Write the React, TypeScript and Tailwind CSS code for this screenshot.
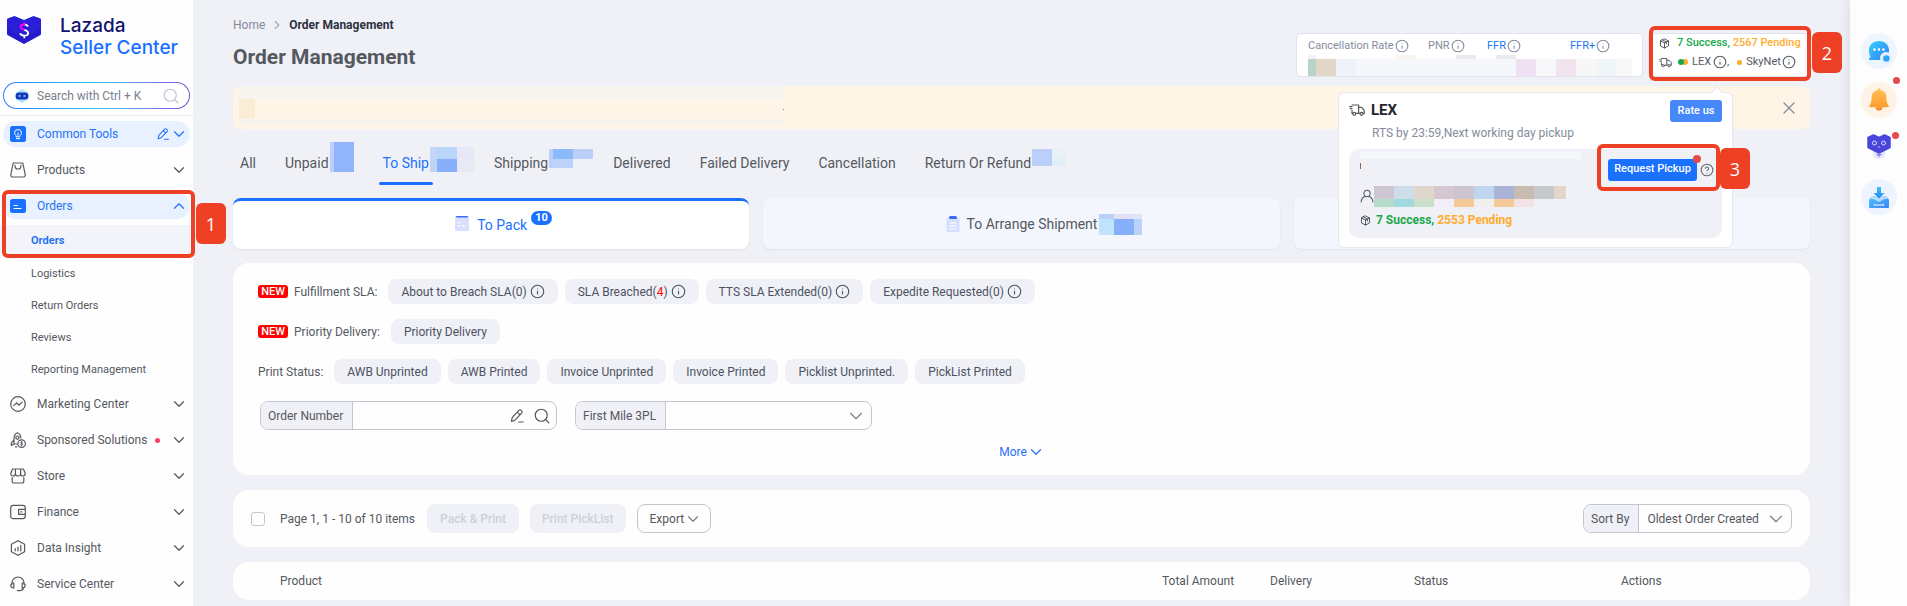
import type { ReactNode } from "react";
import { ChevronDown, ChevronRight, ChevronUp, CircleHelp, Info, Search, X } from "lucide-react";
import clsx from "clsx";

/* ---------- icons ---------- */

function Line({ children, className = "size-4" }: { children: ReactNode; className?: string }) {
  return (
    <svg
      viewBox="0 0 16 16"
      fill="none"
      stroke="currentColor"
      strokeWidth="1.2"
      strokeLinecap="round"
      strokeLinejoin="round"
      aria-hidden="true"
      className={clsx("shrink-0", className)}
    >
      {children}
    </svg>
  );
}

function EditIcon({ className }: { className?: string }) {
  return (
    <Line className={className}>
      <path d="M3.2 9.6 9.8 2.4a1.6 1.6 0 0 1 2.3 0l.5.5a1.6 1.6 0 0 1 0 2.3L6 12.2l-3.6 1.2zM8.4 4.2l2.6 2.6M9.6 14h4.6" />
    </Line>
  );
}

function TruckIcon({ className }: { className?: string }) {
  return (
    <Line className={className}>
      <path d="M3 3h6.6v8.4H6.8M3.6 11.4H3V8.4M.6 4.6H3M1.2 6.6H3M9.6 5.4h3l2.6 3v3h-1M9.6 11.4h1.4" />
      <circle cx="5.2" cy="11.8" r="1.5" />
      <circle cx="12.6" cy="11.8" r="1.5" />
    </Line>
  );
}

function ParcelIcon({ className }: { className?: string }) {
  return (
    <Line className={className}>
      <path d="m8 1.4 5.8 2.8v7.4L8 14.6l-5.8-3V4.2zM2.2 4.4 8 7.2l5.8-2.8M8 7.2v7.2M5 2.9l5.8 2.8v3" />
    </Line>
  );
}

function UserIcon({ className }: { className?: string }) {
  return (
    <Line className={className}>
      <circle cx="8" cy="5" r="3.6" />
      <path d="M1.2 14.8c.4-3.4 2-5.400 4.600-6.200M14.800 14.800c-.4-3.400-2-5.400-4.600-6.200" />
    </Line>
  );
}

function LogoMark() {
  return (
    <svg viewBox="0 0 36 30" className="h-[30px] w-9 shrink-0" aria-hidden="true">
      <path d="M1.500 4 8.500 1.500l9.500 4 9.500-4 7 2.500v15.500L18 28.500l-16.500-9z" fill="#2a1fd6" stroke="#2a1fd6" strokeLinejoin="round" />
      <path d="M1.500 14v5.500l16.500 9 16.500-9V14L18 23z" fill="#1c14b4" opacity=".4" />
      <path
        d="M22 11.500c-.6-1.300-1.900-2-3.700-2M18.300 14.800c2.500.8 3.900 1.500 3.900 3.200s-1.600 2.700-3.900 2.700-3.800-1-4.200-2.400M18.300 20.700v2.600"
        fill="none"
        stroke="#fff"
        strokeWidth="1.800"
      />
      <path d="M18.300 7.200v2.300c-2.300 0-3.800 1-3.800 2.500s1.400 2.100 3.800 2.800" fill="none" stroke="#f0f" strokeWidth="1.800" />
    </svg>
  );
}

function BotIcon() {
  return (
    <svg viewBox="0 0 14 16" className="h-4 w-3.5 shrink-0" aria-hidden="true">
      <path d="M7 1 13 4.500v7L7 15l-6-3.500v-7z" fill="#a8e6fb" />
      <rect x="0.500" y="4.500" width="13" height="7" rx="3.500" fill="#1736b8" />
      <circle cx="4.600" cy="8" r="1.100" fill="#7fd4ff" />
      <circle cx="9.400" cy="8" r="1.100" fill="#7fd4ff" />
    </svg>
  );
}

const icons = {
  tools: (
    <svg viewBox="0 0 16 16" className="size-4 shrink-0" aria-hidden="true">
      <rect width="16" height="16" rx="2.500" fill="#1a71ff" />
      <path
        d="M6.300 9.800C5 9 4.600 8 4.600 6.900a3.400 3.400 0 0 1 6.800 0c0 1.100-.4 2.100-1.700 2.900v1H6.300zM6.400 12.600h3.200M8 7v2.200"
        fill="none"
        stroke="#fff"
        strokeLinecap="round"
      />
    </svg>
  ),
  products: (
    <Line>
      <path d="M3.200 1h9.600l2.400 11.600a2 2 0 0 1-2 2.400H2.800a2 2 0 0 1-2-2.400z" />
      <path d="M5 3.400C5 5.600 6.200 7 8 7s3-1.400 3-3.600" />
    </Line>
  ),
  orders: (
    <svg viewBox="0 0 16 16" className="size-4 shrink-0" aria-hidden="true">
      <rect y="1" width="16" height="14" rx="2.500" fill="#1a71ff" />
      <path d="M4 7.500h3.500M4 10.500h7" fill="none" stroke="#fff" strokeWidth="1.200" strokeLinecap="round" />
    </svg>
  ),
  marketing: (
    <Line>
      <circle cx="8" cy="8" r="7.300" />
      <path d="m3.800 9.600 2.700-2.800 2.600 2.400 3-3" />
    </Line>
  ),
  sponsored: (
    <Line>
      <path d="M4 11.600V6.400C4 3.400 5.200 1.600 7.400.7c2.200.9 3.400 2.700 3.400 5.200M4 7.800l-2.600 3v2.800L4 12h3M5.400 14.800h1.400" />
      <circle cx="7.400" cy="5.600" r="1.600" />
      <circle cx="11.600" cy="11.600" r="3.800" />
      <path d="M12.800 10.400c-.4-.6-2.300-.7-2.300.4 0 1.100 2.300.5 2.300 1.600s-2 1-2.400.3M11.600 9.400v4.400" strokeWidth=".8" />
    </Line>
  ),
  store: (
    <Line>
      <path d="M2.600 1h10.800l1.900 4.600c0 1.500-1 2.400-2.300 2.400s-2.400-.9-2.400-2.200C10.600 7.100 9.500 8 8 8S5.400 7.100 5.400 5.800C5.400 7.100 4.300 8 3 8S.7 7.100.7 5.600zM5.400 5.800V1M10.600 5.800V1M2.200 9.600v3.600A1.800 1.800 0 0 0 4 15h8a1.800 1.800 0 0 0 1.800-1.800V9.600" />
    </Line>
  ),
  finance: (
    <Line>
      <rect x=".7" y="1.400" width="14.600" height="13.200" rx="2.400" />
      <path d="M15.300 5.400H8.600v5h6.700M10.800 7.900h1" />
    </Line>
  ),
  insight: (
    <Line>
      <path d="m8 .7 6.600 3.600v7.400L8 15.300l-6.600-3.600V4.300zM5.200 8.600v2.200M8 7v3.800M10.800 5.400v5.400" />
    </Line>
  ),
  service: (
    <Line>
      <path d="M2 8.200V6.800A6 6 0 0 1 8 1a6 6 0 0 1 6 5.800v1.400M3.800 7v5C1.900 12 .8 11 .8 9.500S1.900 7 3.800 7zM12.200 7v5c1.900 0 3-1 3-2.500S14.100 7 12.200 7zM13.600 11.800c-.5 1.900-2 2.800-4 2.800H7.400" />
    </Line>
  ),
};

/* ---------- small shared parts ---------- */

function InfoMark({ className = "size-3.5" }: { className?: string }) {
  return <Info className={clsx("shrink-0", className)} strokeWidth={1.8} aria-hidden="true" />;
}

function Marker({ n, className }: { n: number; className?: string }) {
  return (
    <span
      className={clsx(
        "absolute z-30 flex h-[41px] w-[30px] items-center justify-center rounded-md bg-[#ed4025] font-['Open_Sans',sans-serif] text-lg text-white",
        className,
      )}
    >
      {n}
    </span>
  );
}

// A strip of blurred-out cells; every cell carries its own width and colour.
function Mosaic({ cells, className }: { cells: string[]; className?: string }) {
  return (
    <span className={clsx("flex", className)} aria-hidden="true">
      {cells.map((cell, i) => (
        <span key={i} className={clsx("shrink-0", cell)} />
      ))}
    </span>
  );
}

/* ---------- sidebar ---------- */

const subItems = ["Orders", "Logistics", "Return Orders", "Reviews", "Reporting Management"];

const menu: { label: string; icon: ReactNode; dot?: boolean }[] = [
  { label: "Marketing Center", icon: icons.marketing },
  { label: "Sponsored Solutions", icon: icons.sponsored, dot: true },
  { label: "Store", icon: icons.store },
  { label: "Finance", icon: icons.finance },
  { label: "Data Insight", icon: icons.insight },
  { label: "Service Center", icon: icons.service },
];

function MenuItem({
  label,
  icon,
  dot,
  active,
  open,
  edit,
}: {
  label: string;
  icon: ReactNode;
  dot?: boolean;
  active?: boolean;
  open?: boolean;
  edit?: boolean;
}) {
  const Chevron = open ? ChevronUp : ChevronDown;
  return (
    <button
      type="button"
      className={clsx(
        "mx-[3px] my-[5px] flex h-[26px] items-center rounded-full pl-[7px] pr-0.5 text-left text-xs",
        active ? "bg-[#e8f1ff] text-[#2673f5]" : "text-[#55585f]",
      )}
    >
      {icon}
      <span className="ml-[11px]">{label}</span>
      {dot && <span className="ml-2 size-[5px] rounded-full bg-[#ff4060]" />}
      <span className="ml-auto flex items-center">
        {edit && <EditIcon className="size-3.5" />}
        <Chevron className="size-[18px]" strokeWidth={1.6} aria-hidden="true" />
      </span>
    </button>
  );
}

function Sidebar() {
  return (
    <aside className="flex w-[193px] shrink-0 flex-col bg-[#fefefe]">
      <div className="flex items-start gap-[18px] pl-1.5 pt-[15px]">
        <LogoMark />
        <div className="font-[Inter,sans-serif] text-[19px] font-medium leading-[22px]">
          <div className="text-[#14146e]">Lazada</div>
          <div className="text-[#1a71ff]">Seller Center</div>
        </div>
      </div>
      <div className="mx-[3px] mt-[23px] rounded-full bg-linear-to-r from-[#2f7bff] via-[#29c4f5] to-[#7a4be0] p-px">
        <label className="flex h-[25px] items-center rounded-full bg-white pl-[11px] pr-[9px]">
          <BotIcon />
          <input
            type="text"
            aria-label="Search"
            placeholder="Search with Ctrl + K"
            className="ml-2 min-w-0 flex-1 text-xs placeholder-[#7a7f8c] outline-none"
          />
          <Search className="size-[18px] shrink-0 text-[#c2c6d3]" strokeWidth={1.6} aria-hidden="true" />
        </label>
      </div>
      <nav className="mt-1.5 flex flex-col border-t border-[#ebecf0]">
        <MenuItem label="Common Tools" icon={icons.tools} active edit />
        <MenuItem label="Products" icon={icons.products} />
        <div className="relative flex flex-col">
          <MenuItem label="Orders" icon={icons.orders} active open />
          <a
            href="#orders"
            className="my-px flex h-8 items-center bg-[#f3f4f9] pl-[31px] text-[11px] font-bold text-[#2673f5]"
          >
            {subItems[0]}
          </a>
          <span className="pointer-events-none absolute -right-0.5 bottom-0 left-0.5 top-0.5 z-20 rounded-md border-4 border-[#ed4025]" />
          <Marker n={1} className="left-full top-[15px] ml-[3px]" />
        </div>
        {subItems.slice(1).map((item) => (
          <a
            key={item}
            href={`#${item.toLowerCase().replace(" ", "-")}`}
            className="flex h-8 items-center pl-[31px] text-[11px] text-[#55585f]"
          >
            {item}
          </a>
        ))}
        {menu.map((item) => (
          <MenuItem key={item.label} {...item} />
        ))}
      </nav>
    </aside>
  );
}

/* ---------- header ---------- */

const metrics = [
  { label: "Cancellation Rate", width: "w-[120px]" },
  { label: "PNR", width: "w-[59px]" },
  { label: "FFR", width: "w-[83px]", link: true },
  { label: "FFR+", width: "w-[50px]", link: true },
];

function MetricsCard() {
  return (
    <div className="h-11 w-[347px] rounded-[5px] border border-[#dde3f0] bg-white pl-[11px] pt-[3px]">
      <div className="flex text-[11px] leading-[17px]">
        {metrics.map(({ label, width, link }) => (
          <span
            key={label}
            className={clsx("flex items-center gap-px whitespace-nowrap", width, link ? "text-[#2673f5]" : "text-[#858b9c]")}
          >
            {label}
            <InfoMark className="size-3.5 text-[#858b9c]" />
          </span>
        ))}
      </div>
      <Mosaic
        className="mt-px h-1"
        cells={[
          "w-2 bg-[#f3f2f8]",
          "w-20",
          "w-5 bg-[#faf4f1]",
          "w-10",
          "w-5 bg-[#eaeaee]",
          "w-5",
          "w-5 bg-[#eaeaee]",
        ]}
      />
      <Mosaic
        className="h-[17px]"
        cells={[
          "w-2 bg-[#b9d3c8]",
          "w-5 bg-[#e3d8c8]",
          "w-5 bg-[#eef2fb]",
          "w-40 bg-[#f6f7fa]",
          "w-5 bg-[#efe0f2]",
          "w-5 bg-[#f8f7fa]",
          "w-5 bg-[#f2e4ef]",
          "w-5 bg-[#f7f7f7]",
          "w-5 bg-[#f0f6f7]",
          "w-4 bg-[#f8f8f9]",
        ]}
      />
    </div>
  );
}

function LexPopup() {
  return (
    <div className="absolute right-[77px] top-[59px] z-10 h-[156px] w-[395px] rounded-md border border-[#e4e7ee] bg-white px-2.5 pt-[7px]">
      <span className="absolute -top-[5px] right-[11px] size-2 rotate-45 border-l border-t border-[#e4e7ee] bg-white" />
      <div className="flex items-start justify-between">
        <div className="flex items-center gap-1.5">
          <TruckIcon className="size-4 text-[#55585f]" />
          <h2 className="text-[15px] font-bold leading-5 text-[#25262b]">LEX</h2>
        </div>
        <button type="button" className="h-[22px] w-[52px] rounded-[3px] bg-[#4688fa] text-[11px] font-medium text-white">
          Rate us
        </button>
      </div>
      <p className="mt-px pl-[23px] text-xs leading-5 text-[#858b9c]">RTS by 23:59,Next working day pickup</p>
      <div className="mt-1.5 flex h-[89px] items-start justify-between rounded-[10px] bg-[#f0f1f6]">
        <div className="pl-[11px] pt-0.5">
          <span className="block h-2 w-[221px] bg-[#f6f7fa]" />
          <span className="mt-1 block h-1.5 w-px bg-[#8a6a4a]" />
          <div className="mt-[17px] flex items-start text-[#55585f]">
            <UserIcon className="mt-[3px] size-3.5" />
            <span>
              <Mosaic
                className="h-[13px]"
                cells={[
                  "w-5 bg-[#cdc7d3]",
                  "w-5 bg-[#cfddea]",
                  "w-5 bg-[#e0d7cc]",
                  "w-5 bg-[#d6c7d3]",
                  "w-5 bg-[#cdc5d1]",
                  "w-5 bg-[#bfd6ee]",
                  "w-5 bg-[#abb3d6]",
                  "w-5 bg-[#c8bcb2]",
                  "w-5 bg-[#c6c8cc]",
                  "w-3 bg-[#e3d5c9]",
                ]}
              />
              <Mosaic
                className="h-2"
                cells={[
                  "w-5 bg-[#b7dccb]",
                  "w-5 bg-[#a1d9de]",
                  "w-5 bg-[#cadfca]",
                  "w-5 bg-[#f2eef5]",
                  "w-5 bg-[#f4cb98]",
                  "w-5 bg-[#f1efec]",
                  "w-5 bg-[#f4cb98]",
                  "w-5 bg-[#f3e3e6]",
                ]}
              />
            </span>
          </div>
          <div className="mt-1 flex items-center gap-[5px] text-xs font-bold leading-[18px]">
            <ParcelIcon className="size-[11px] text-[#3b3d44]" />
            <span>
              <span className="text-[#18a84c]">7 Success,</span> <span className="text-[#ffab2e]">2553 Pending</span>
            </span>
          </div>
        </div>
        <div className="relative mr-0.5 mt-[-5px] flex h-[47px] w-[123px] items-center rounded-md border-4 border-[#ed4025] pl-[7px] pt-1">
          <button
            type="button"
            className="relative h-[22px] w-[89px] rounded-[3px] bg-[#1a71ff] text-[11px] font-medium text-white"
          >
            Request Pickup
            <span className="absolute -right-1 -top-1 size-2 rounded-full bg-[#e5484d]" />
          </button>
          <CircleHelp className="ml-[3px] size-3.5 text-[#62666f]" strokeWidth={1.8} aria-hidden="true" />
          <Marker n={3} className="left-full top-0 ml-1" />
        </div>
      </div>
    </div>
  );
}

function StatusCard() {
  return (
    <div className="relative">
      <div className="h-11 w-[162px] rounded-[5px] border border-[#dde3f0] bg-white pl-2.5">
        <div className="flex items-center gap-[7px] text-[11px] font-medium leading-[18px]">
          <ParcelIcon className="size-[11px] text-[#3b3d44]" />
          <span className="whitespace-nowrap">
            <span className="text-[#18a84c]">7 Success,</span> <span className="text-[#ffab2e]">2567 Pending</span>
          </span>
        </div>
        <div className="flex items-center text-[11px] leading-5 text-[#55585f]">
          <TruckIcon className="size-[13px]" />
          <span className="ml-1.5 flex">
            <span className="z-[1] size-[6px] rounded-full bg-[#18a84c]" />
            <span className="-ml-0.5 size-[6px] rounded-full bg-[#ffab2e]" />
          </span>
          <span className="ml-1">LEX</span>
          <InfoMark className="ml-0.5 size-3.5" />
          <span>,</span>
          <span className="ml-2 size-[5px] rounded-full bg-[#ffab2e]" />
          <span className="ml-1">SkyNet</span>
          <InfoMark className="ml-px size-3.5" />
        </div>
      </div>
      <span className="pointer-events-none absolute -bottom-1 -right-px -top-[7px] left-px z-20 rounded-md border-4 border-[#ed4025]" />
      <Marker n={2} className="-top-px left-full ml-0.5" />
      <LexPopup />
    </div>
  );
}

/* ---------- tabs and stages ---------- */

const tabs: { label: string; active?: boolean; slot?: string; badge?: ReactNode }[] = [
  { label: "All" },
  {
    label: "Unpaid",
    slot: "w-[25px]",
    badge: <Mosaic className="mt-[-11px] h-[30px]" cells={["w-1 bg-[#bccff9]", "w-5 bg-[#90b5fb]"]} />,
  },
  {
    label: "To Ship",
    active: true,
    slot: "w-[36px]",
    badge: (
      <span className="mt-[-6px] block">
        <Mosaic className="h-3" cells={["w-[7px] bg-[#c5d6f7]", "w-5 bg-[#b9d5fa]", "w-[17px] bg-[#e7e7f6]"]} />
        <Mosaic className="h-[13px]" cells={["w-[7px] bg-[#c0d3f7]", "w-5 bg-[#87affa]", "w-[17px] bg-[#e9e9f5]"]} />
      </span>
    ),
  },
  {
    label: "Shipping",
    slot: "w-[36px]",
    badge: (
      <span className="mt-[-4px] block">
        <Mosaic className="h-2.5" cells={["w-1 bg-[#bccff9]", "w-5 bg-[#8bb9f9]", "w-5 bg-[#bccff9]"]} />
        <Mosaic className="h-[9px]" cells={["w-1 bg-[#bccff9]", "w-5 bg-[#bcd2fa]"]} />
      </span>
    ),
  },
  { label: "Delivered" },
  { label: "Failed Delivery" },
  { label: "Cancellation" },
  {
    label: "Return Or Refund",
    slot: "w-[36px]",
    badge: (
      <span className="mt-[-4px] block">
        <Mosaic className="h-2.5" cells={["w-5 bg-[#bccff9]", "w-3.5 bg-[#e8f1f6]"]} />
        <Mosaic className="h-[7px]" cells={["w-5 bg-[#bccff9]", "w-3.5 bg-[#e0eff7]"]} />
      </span>
    ),
  },
];

function Tabs() {
  return (
    <nav className="mt-6 flex gap-[29px] pl-[7px] text-sm leading-5">
      {tabs.map(({ label, active, slot, badge }) => (
        <a
          key={label}
          href={`#${label.toLowerCase().replaceAll(" ", "-")}`}
          className={clsx("flex pb-3", active ? "text-[#1a71ff]" : "text-[#55585f]")}
        >
          <span className="relative">
            {label}
            {active && <span className="absolute -bottom-3 -left-1 -right-1 h-[3px] rounded-full bg-[#1a71ff]" />}
          </span>
          {badge && <span className={clsx("h-5 pl-px", slot)}>{badge}</span>}
        </a>
      ))}
    </nav>
  );
}

function Stages() {
  return (
    <div className="mt-[13px] grid grid-cols-3 gap-3.5 text-sm">
      <button
        type="button"
        className="flex h-[51px] items-center justify-center rounded-lg border-t-[3px] border-[#1a71ff] bg-white text-[#1a71ff] shadow-sm shadow-black/5"
      >
        <svg viewBox="0 0 14 15" className="mb-1 mr-2 h-[15px] w-3.5" aria-hidden="true">
          <rect width="14" height="15" rx="1.500" fill="#d9e0ff" />
          <rect x="1" width="12" height="1.600" rx=".8" fill="#3f6af0" />
          <path d="M3 6.500h2M3 10h2M7 10h3" stroke="#fff" strokeWidth="1.400" />
        </svg>
        <span className="relative">
          To Pack
          <span className="absolute -top-1 left-full ml-1 rounded-full bg-[#1a71ff] px-1 text-[11px] font-bold leading-[14px] text-white">
            10
          </span>
        </span>
      </button>
      <button
        type="button"
        className="flex h-[51px] items-center justify-center rounded-lg bg-[#f3f7fd] text-[#55585f] shadow-sm shadow-black/5"
      >
        <svg viewBox="0 0 14 16" className="mr-[7px] h-4 w-3.5" aria-hidden="true">
          <rect x=".5" y="1.500" width="13" height="14.500" rx="1.500" fill="#d6deff" />
          <rect x="3" y="0" width="8" height="3" rx="1.500" fill="#3f6af0" />
          <path d="M3.500 7h7M3.500 10h7M3.500 13h7" stroke="#fff" strokeWidth="1.200" />
        </svg>
        <span className="relative">
          To Arrange Shipment
          <span className="absolute left-full top-0 ml-0.5">
            <Mosaic className="h-[5px]" cells={["w-[15px] bg-[#bccff9]", "w-5 bg-[#e3dff7]", "w-2 bg-[#dce8fa]"]} />
            <Mosaic className="h-4" cells={["w-[15px] bg-[#bfe3fb]", "w-5 bg-[#87b0fa]", "w-2 bg-[#bcd2fa]"]} />
          </span>
        </span>
      </button>
      <div className="h-[51px] rounded-lg bg-[#f3f7fd] shadow-sm shadow-black/5" />
    </div>
  );
}

/* ---------- filters ---------- */

function NewTag() {
  return (
    <span className="mr-1.5 flex h-[13px] w-[30px] items-center justify-center rounded-[3px] bg-[#fe0000] text-[11px] font-medium leading-none text-white">
      NEW
    </span>
  );
}

function Pill({ children, info }: { children: ReactNode; info?: boolean }) {
  return (
    <button type="button" className="flex h-[25px] items-center rounded-lg bg-[#f0f1f6] px-[13px] text-[#4c5263]">
      <span>{children}</span>
      {info && <InfoMark className="ml-[3px] size-[15px]" />}
    </button>
  );
}

const printStatuses = [
  "AWB Unprinted",
  "AWB Printed",
  "Invoice Unprinted",
  "Invoice Printed",
  "Picklist Unprinted.",
  "PickList Printed",
];

function Filters() {
  return (
    <section className="mt-3.5 rounded-2xl bg-[#fefefe] pb-[13px] pl-[25px] pr-6 pt-4 text-xs text-[#55585f]">
      <div className="flex flex-col gap-[15px]">
        <div className="flex items-center gap-[7px]">
          <span className="flex items-center pr-1">
            <NewTag />
            Fulfillment SLA:
          </span>
          <Pill info>About to Breach SLA(0)</Pill>
          <Pill info>
            SLA Breached(<span className="text-[#fe0000]">4</span>)
          </Pill>
          <Pill info>TTS SLA Extended(0)</Pill>
          <Pill info>Expedite Requested(0)</Pill>
        </div>
        <div className="flex items-center gap-[7px]">
          <span className="flex items-center pr-1">
            <NewTag />
            Priority Delivery:
          </span>
          <Pill>Priority Delivery</Pill>
        </div>
        <div className="flex items-center gap-[7px]">
          <span className="pr-1">Print Status:</span>
          {printStatuses.map((status) => (
            <Pill key={status}>{status}</Pill>
          ))}
        </div>
      </div>
      <div className="mt-[17px] flex gap-[18px] pl-0.5">
        <div className="flex h-[29px] w-[297px] items-center overflow-hidden rounded-lg border border-[#c3c6d0]">
          <label
            htmlFor="order-number"
            className="flex h-full shrink-0 items-center border-r border-[#c3c6d0] bg-[#f0f1f6] pl-[7px] pr-[9px]"
          >
            Order Number
          </label>
          <input id="order-number" type="text" className="h-full min-w-0 flex-1 px-2 outline-none" />
          <EditIcon className="size-4" />
          <Search className="ml-2 mr-[5px] size-[18px] shrink-0" strokeWidth={1.6} aria-hidden="true" />
        </div>
        <div className="relative flex h-[29px] w-[297px] items-center overflow-hidden rounded-lg border border-[#c3c6d0]">
          <label
            htmlFor="first-mile"
            className="flex h-full shrink-0 items-center border-r border-[#c3c6d0] bg-[#f0f1f6] pl-[7px] pr-[9px]"
          >
            First Mile 3PL
          </label>
          <select id="first-mile" className="h-full min-w-0 flex-1 appearance-none px-2 outline-none">
            <option />
          </select>
          <ChevronDown
            className="pointer-events-none absolute right-1 size-[22px] text-[#7a7f8c]"
            strokeWidth={1.3}
            aria-hidden="true"
          />
        </div>
      </div>
      <button type="button" className="mx-auto mt-3 flex items-center leading-5 text-[#2673f5]">
        More
        <ChevronDown className="size-[18px]" strokeWidth={1.6} aria-hidden="true" />
      </button>
    </section>
  );
}

function Toolbar() {
  return (
    <section className="mt-[15px] flex h-[57px] items-center rounded-2xl bg-[#fefefe] px-[18px] text-xs text-[#55585f]">
      <label className="flex items-center gap-[15px]">
        <input type="checkbox" className="size-3.5 appearance-none rounded-[3px] border border-[#c3c6d0] bg-white" />
        Page 1, 1 - 10 of 10 items
      </label>
      <button type="button" disabled className="ml-3 h-[29px] rounded-lg bg-[#f0f1f6] px-[13px] font-medium text-[#cdd0da]">
        Pack &amp; Print
      </button>
      <button type="button" disabled className="ml-[11px] h-[29px] rounded-lg bg-[#f0f1f6] px-3 font-medium text-[#cdd0da]">
        Print PickList
      </button>
      <button type="button" className="ml-[11px] flex h-[29px] items-center rounded-lg border border-[#c3c6d0] pl-3 pr-2">
        Export
        <ChevronDown className="size-[18px] text-[#7a7f8c]" strokeWidth={1.6} aria-hidden="true" />
      </button>
      <div className="relative ml-auto flex h-[29px] w-[209px] items-center overflow-hidden rounded-lg border border-[#c3c6d0]">
        <label
          htmlFor="sort-by"
          className="flex h-full shrink-0 items-center border-r border-[#c3c6d0] bg-[#f0f1f6] pl-[7px] pr-[9px]"
        >
          Sort By
        </label>
        <select id="sort-by" className="h-full min-w-0 flex-1 appearance-none pl-2 pr-6 outline-none">
          <option>Oldest Order Created</option>
        </select>
        <ChevronDown
          className="pointer-events-none absolute right-1 size-[22px] text-[#7a7f8c]"
          strokeWidth={1.3}
          aria-hidden="true"
        />
      </div>
    </section>
  );
}

function OrdersTable() {
  return (
    <section className="mt-[15px] rounded-2xl bg-[#fefefe]">
      <table className="w-full table-fixed text-left text-xs text-[#55585f]">
        <thead>
          <tr className="h-[38px]">
            <th className="pl-[47px] font-normal">Product</th>
            <th className="w-[108px] font-normal">Total Amount</th>
            <th className="w-36 font-normal">Delivery</th>
            <th className="w-[207px] font-normal">Status</th>
            <th className="w-[189px] font-normal">Actions</th>
          </tr>
        </thead>
      </table>
    </section>
  );
}

/* ---------- right rail ---------- */

function Rail() {
  return (
    <aside className="flex w-[57px] shrink-0 flex-col items-center bg-[#fdfdfe] pt-[33px] shadow-[-2px_0_10px_rgba(40,50,90,0.1)]">
      <button type="button" aria-label="Chat" className="size-9 rounded-full bg-[#edf5ff]">
        <svg viewBox="0 0 36 36" className="size-9" aria-hidden="true">
          <defs>
            <linearGradient id="chat" x1="0" y1="0" x2="1" y2="1">
              <stop offset="0" stopColor="#39d0fb" />
              <stop offset="1" stopColor="#2d7ff8" />
            </linearGradient>
          </defs>
          <path d="M18 8c6 0 10 4 10 9.500S24 27 18 27H8.500c-.8 0-.8-.7-.4-1.200l1.400-2.200A9.600 9.600 0 0 1 8 17.500C8 12 12 8 18 8z" fill="url(#chat)" />
          <circle cx="13.500" cy="16.500" r="1.300" fill="#fff" />
          <circle cx="18" cy="16.500" r="1.300" fill="#fff" />
          <circle cx="22.500" cy="16.500" r="1.300" fill="#fff" />
          <circle cx="25" cy="25" r="6" fill="#e8f0ff" />
          <circle cx="25.400" cy="25.400" r="3.200" fill="#2ba6fa" />
        </svg>
      </button>
      <button type="button" aria-label="Notifications" className="relative mt-[13px] size-9 rounded-full bg-[#fff3e8]">
        <svg viewBox="0 0 36 36" className="size-9" aria-hidden="true">
          <defs>
            <linearGradient id="bell" x1="0" y1="0" x2="0" y2="1">
              <stop offset="0" stopColor="#ffc353" />
              <stop offset="1" stopColor="#ff9d2e" />
            </linearGradient>
          </defs>
          <path d="M18 6.500c.9 0 1.400.6 1.400 1.500 4 .8 6 3.600 6 7.600 0 4.400.8 6.200 2 7.600.8 1 .2 2-.9 2h-17c-1.100 0-1.700-1-.9-2 1.200-1.400 2-3.200 2-7.600 0-4 2-6.800 6-7.600 0-.9.500-1.500 1.400-1.500z" fill="url(#bell)" />
          <path d="M14.500 25.200c0 2.200 1.600 3.400 3.500 3.400s3.500-1.200 3.500-3.400z" fill="#f98a2b" />
        </svg>
        <span className="absolute -right-[3px] -top-[5px] size-[7px] rounded-full bg-[#e5484d]" />
      </button>
      <button type="button" aria-label="Assistant" className="relative mt-[15px] h-7 w-6">
        <svg viewBox="0 0 24 28" className="h-7 w-6" aria-hidden="true">
          <path d="M6 16h12v5c0 3-2.500 5-6 5s-6-2-6-5z" fill="#e6e6fb" />
          <path d="M9 21h6l-3 3z" fill="#8f86ec" />
          <path d="M1 4.500 6.500 2 12 4.500 17.500 2 23 4.500v10L12 20 1 14.500z" fill="#4a46dc" stroke="#4a46dc" strokeWidth="1.500" strokeLinejoin="round" />
          <circle cx="7.500" cy="10" r="2" fill="none" stroke="#d8dbff" />
          <circle cx="16.500" cy="10" r="2" fill="none" stroke="#d8dbff" />
          <path d="M10.500 13.500h3L12 15z" fill="#ff9ad5" />
        </svg>
        <span className="absolute -right-2 -top-px size-[7px] rounded-full bg-[#e5484d]" />
      </button>
      <button type="button" aria-label="Downloads" className="mt-[18px] size-9 rounded-full bg-[#edf4ff]">
        <svg viewBox="0 0 36 36" className="size-9" aria-hidden="true">
          <defs>
            <linearGradient id="tray" x1="0" y1="0" x2="1" y2="1">
              <stop offset="0" stopColor="#4fc8fb" />
              <stop offset="1" stopColor="#3a82f6" />
            </linearGradient>
            <linearGradient id="arrow" x1="0" y1="0" x2="0" y2="1">
              <stop offset="0" stopColor="#35c3f7" />
              <stop offset="1" stopColor="#2d86f8" />
            </linearGradient>
          </defs>
          <path d="M11 17.500h14l3 3V28a1 1 0 0 1-1 1H9a1 1 0 0 1-1-1v-7.500z" fill="url(#tray)" />
          <path d="M11 17.500h14l1.500 2.500h-3L18 23l-5.500-3h-3z" fill="#b4dcff" />
          <path d="M16 8h4v6h3.500L18 19.500 12.500 14H16z" fill="url(#arrow)" />
          <path d="M13.500 25v1h9v-1" fill="none" stroke="#fff" strokeWidth="1.200" />
        </svg>
      </button>
    </aside>
  );
}

/* ---------- page ---------- */

export default function App() {
  return (
    <div className="flex min-h-screen overflow-hidden bg-[#f0f1f6] font-[Roboto,sans-serif]">
      <Sidebar />
      <main className="min-w-0 flex-1 px-10">
        <header className="flex justify-between pb-[9px]">
          <div className="pt-4">
            <nav aria-label="Breadcrumb" className="flex items-center gap-[5px] text-xs leading-[18px]">
              <a href="#home" className="text-[#858b9c]">
                Home
              </a>
              <ChevronRight className="size-3.5 text-[#858b9c]" strokeWidth={1.8} aria-hidden="true" />
              <span className="font-bold text-[#2d3142]">Order Management</span>
            </nav>
            <h1 className="mt-[9px] text-[21px] font-bold leading-7 text-[#55585f]">Order Management</h1>
          </div>
          <div className="mt-[33px] flex gap-[5px]">
            <MetricsCard />
            <StatusCard />
          </div>
        </header>

        <div className="flex h-[43px] justify-between rounded-lg bg-[#fef5e7] pl-1.5">
          <div>
            <Mosaic className="h-[13px]" cells={["w-[545px] bg-[#f7f3ef]"]} />
            <span className="flex h-5 items-center justify-between">
              <span className="h-5 w-4 bg-[#fbecd6]" />
              <span className="size-px bg-[#3a8fe0]" />
            </span>
            <Mosaic className="h-1.5" cells={["w-[545px] bg-[#f7f3ef]"]} />
          </div>
          <button type="button" aria-label="Close" className="mr-[11px] text-[#858b9c]">
            <X className="size-5" strokeWidth={1.5} aria-hidden="true" />
          </button>
        </div>

        <Tabs />
        <Stages />
        <Filters />
        <Toolbar />
        <OrdersTable />
      </main>
      <Rail />
    </div>
  );
}
